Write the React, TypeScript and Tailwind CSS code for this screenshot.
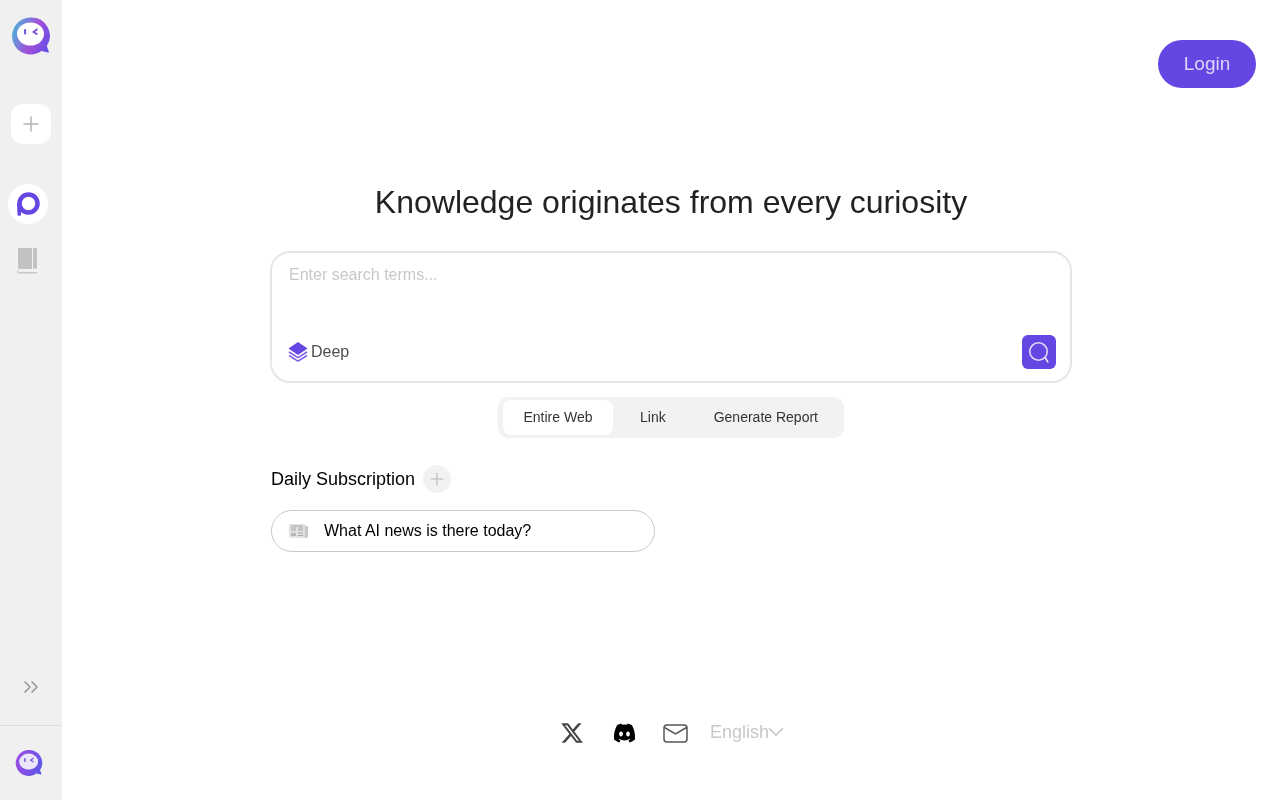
import { Plus, ChevronsRight, ChevronDown } from 'lucide-react';
import { FaXTwitter, FaDiscord } from 'react-icons/fa6';

const Logo = ({ size, id, from, via, to, face, eye }: { size: number; id: string; from: string; via: string; to: string; face: string; eye: string }) => (
  <svg width={size} height={size} viewBox="0 0 40 40">
    <defs>
      <linearGradient id={id} x1="0" y1="0.3" x2="1" y2="0.7">
        <stop offset="0" stopColor={from} />
        <stop offset="0.55" stopColor={via} />
        <stop offset="1" stopColor={to} />
      </linearGradient>
    </defs>
    <path
      d="M19.500 1.500a18.500 18.500 0 1 0 11 33.400l6.500 1.600c.7.100 1-.3.800-.9l-2-5.500A18.500 18.500 0 0 0 19.500 1.500z"
      fill={`url(#${id})`}
    />
    <ellipse cx="19.500" cy="18" rx="13.500" ry="11.500" fill={face} />
    <rect x="13" y="13" width="2.200" height="5.600" rx="1" fill={eye} />
    <path d="M26.500 13l-4 3 4 2.600" fill="none" stroke={eye} strokeWidth="1.800" />
  </svg>
);

const tabs = ['Entire Web', 'Link', 'Generate Report'];

const App = () => {
  return (
    <div className="flex h-[800px] w-full overflow-hidden font-['Liberation_Sans',Arial,sans-serif] will-change-transform">
      {/* Sidebar */}
      <aside className="flex w-[62px] shrink-0 flex-col items-center bg-[#f0f0f0]">
        <div className="mt-[16px] h-[40px]">
          <Logo size={40} id="logoTop" from="#4fb0dc" via="#a24fd8" to="#6a4ee6" face="#ffffff" eye="#7a55d8" />
        </div>
        <button className="mt-[48px] flex h-[40px] w-[40px] items-center justify-center rounded-[12px] bg-white text-[#b4b4b4]">
          <Plus size={24} strokeWidth={1.5} />
        </button>
        <div className="mt-[40px] mr-[6px] flex h-[40px] w-[40px] items-center justify-center rounded-full bg-white">
          <svg width="24" height="25" viewBox="0 0 24 25">
            <circle cx="12.500" cy="11.500" r="9" fill="none" stroke="#6546e3" strokeWidth="4.500" />
            <path d="M1 11.500h4.500L5 22.500a1.800 1.800 0 0 1-3.500 0z" fill="#6546e3" />
          </svg>
        </div>
        <div className="mt-[24px] mr-[8px] h-[26px]">
          <svg width="22" height="26" viewBox="0 0 22 26">
            <path d="M2 0h14v21H2z" fill="#c2c2c2" />
            <path d="M17 0h3.500a.5.5 0 0 1 .5.5V20.500h-4z" fill="#c2c2c2" />
            <path d="M2 22.500v1.500a.8.8 0 0 0 .8.8H21" fill="none" stroke="#c8c8c8" strokeWidth="1.400" />
          </svg>
        </div>
        <button className="mt-auto mb-[26px] text-[#9a9a9a]">
          <ChevronsRight size={24} strokeWidth={1.75} />
        </button>
        <div className="flex h-[75px] w-full items-center justify-center border-t border-[#dcdcdc] pr-[5px] pb-[1px]">
          <Logo size={28} id="logoBottom" from="#9a50e4" via="#7d4fe6" to="#5a5ae8" face="#ece6fa" eye="#7a55d8" />
        </div>
      </aside>

      {/* Main */}
      <main className="flex min-w-0 flex-1 flex-col">
        <div className="flex justify-end pt-[40px] pr-[24px]">
          <button className="h-[48px] w-[98px] rounded-[24px] bg-[#6546e3] text-[19px] text-[#ddd6f8]">Login</button>
        </div>

        <div className="mx-auto mt-[93px] flex w-[802px] flex-col">
          <h1 className="text-center text-[32px] leading-[42px] font-normal text-[#222222]">
            Knowledge originates from every curiosity
          </h1>

          <div className="mt-[28px] flex h-[132px] flex-col rounded-[20px] border-2 border-[#e6e6e6] pt-[12px] pr-[14px] pb-[12px] pl-[16px]">
            <div className="pl-[1px] text-[16px] leading-[20px] text-[#c8c8c8]">Enter search terms...</div>
            <div className="mt-auto flex items-center justify-between">
              <div className="flex items-center gap-[3px] text-[16px] text-[#4f4f4f]">
                <svg width="20" height="21" viewBox="0 0 20 21">
                  <path d="M10 0l9.500 6.500-9.500 6.500-9.500-6.500z" fill="#6546e3" />
                  <path d="M1 10l9 5.700 9-5.700M1 13.500l9 5.700 9-5.700" fill="none" stroke="#7a5ee8" strokeWidth="1.500" />
                </svg>
                <span>Deep</span>
              </div>
              <button className="flex h-[34px] w-[34px] items-center justify-center rounded-[6px] bg-[#6546e3]">
                <svg width="22" height="22" viewBox="0 0 22 22" fill="none" stroke="#e2dcfa" strokeWidth="1.600">
                  <circle cx="10.500" cy="10.500" r="8.700" />
                  <path d="M17.500 17l2.300 4" strokeLinecap="round" />
                </svg>
              </button>
            </div>
          </div>

          <div className="mt-[14px] flex justify-center">
            <div className="flex h-[41px] items-center rounded-[10px] bg-[#f2f2f2] pr-[2px] pl-[5px]">
              {tabs.map((tab, i) => (
                <div
                  key={tab}
                  className={
                    i === 0
                      ? 'mr-[3px] flex h-[35px] w-[110px] items-center justify-center rounded-[8px] bg-white text-[14px] text-[#333333]'
                      : 'flex h-[35px] items-center justify-center px-[24px] text-[14px] text-[#333333]'
                  }
                >
                  {tab}
                </div>
              ))}
            </div>
          </div>

          <div className="mt-[27px] flex items-center gap-[8px] pl-[1px]">
            <span className="text-[18px] leading-[28px] text-black">Daily Subscription</span>
            <span className="flex h-[28px] w-[28px] items-center justify-center rounded-full bg-[#f2f2f2] text-[#b4b4b4]">
              <Plus size={20} strokeWidth={1.25} />
            </span>
          </div>

          <div className="mt-[17px] ml-[1px] flex h-[42px] w-[384px] items-center gap-[16px] rounded-full border border-[#c8c8c8] pl-[17px]">
            <svg width="19" height="16" viewBox="0 0 19 16">
              <path d="M0 1h16v14H2a2 2 0 0 1-2-2z" fill="#e2e2e2" />
              <path d="M16 3h3v10a2 2 0 0 1-2 2h-1z" fill="#c8c8c8" />
              <path d="M2 3h12M2 5h5M9 5h5M2 7h5M9 7h5" stroke="#a8a8a8" strokeWidth="1" />
              <path d="M2 10h5v3H2z" fill="#b8b8b8" />
              <path d="M9 10h5M9 12.500h5" stroke="#a8a8a8" strokeWidth="1" />
            </svg>
            <span className="text-[16px] text-black">What AI news is there today?</span>
          </div>
        </div>

        {/* Footer */}
        <div className="mt-auto mb-[51px] flex h-[32px] items-center justify-center pl-[7px]">
          <FaXTwitter size={24} className="text-[#444444]" />
          <FaDiscord preserveAspectRatio="none" className="ml-[29px] h-[22px] w-[23px] text-black" />
          <svg className="ml-[27px]" width="25" height="19" viewBox="0 0 25 19" fill="none" stroke="#555555" strokeWidth="1.500">
            <rect x="1" y="1" width="23" height="17" rx="3" />
            <path d="M1.500 3.500l11 6.500 11-6.500" />
          </svg>
          <span className="mb-[2px] ml-[22px] text-[18px] text-[#c8c8c8]">English</span>
          <ChevronDown size={26} strokeWidth={1.25} className="mb-[3px] -ml-[6px] text-[#c0c0c0]" />
        </div>
      </main>
    </div>
  );
};

export default App;
